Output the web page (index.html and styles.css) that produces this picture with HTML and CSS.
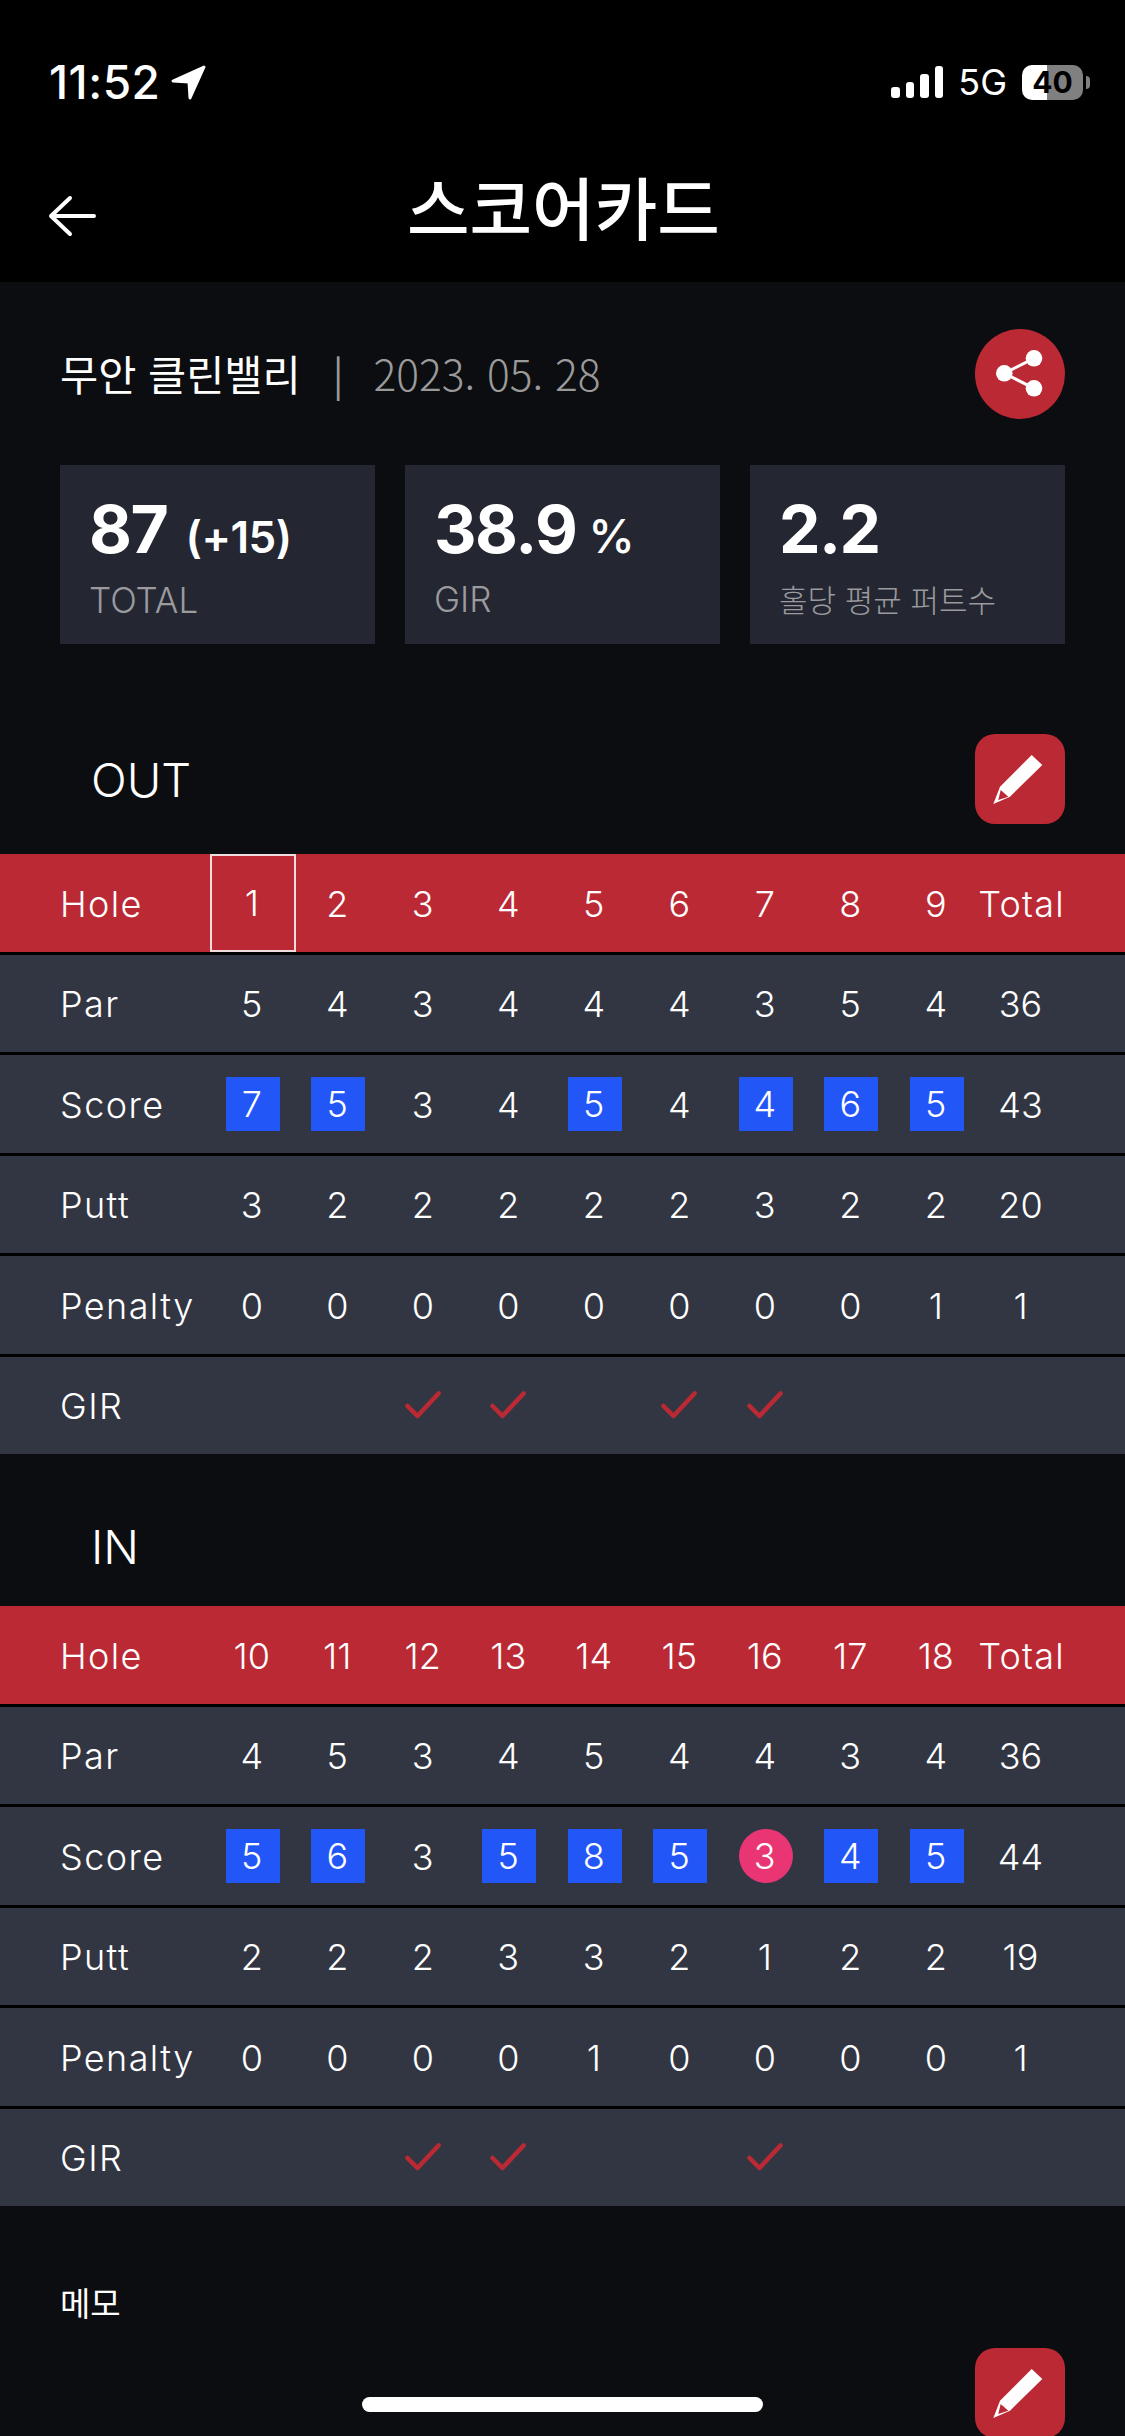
FILE: index.html
```html
<!DOCTYPE html>
<html lang="ko">
<head>
    <meta charset="UTF-8">
    <meta name="viewport" content="width=device-width, initial-scale=1.0">
    <title>스코어카드</title>
    <link rel="stylesheet" href="styles.css">
</head>
<body>
    <div class="page">
        <header class="top">
            <div class="status">
                <div class="status-left">
                    <span class="time">11:52</span>
                    <svg class="loc" width="36" height="35" viewBox="0 0 36 35"><path d="M33 2 L2 16 L18 17 L19 33 Z" fill="#fff" stroke="#fff" stroke-width="3" stroke-linejoin="round"/></svg>
                </div>
                <div class="status-right">
                    <div class="signal"><i class="b1"></i><i class="b2"></i><i class="b3"></i><i class="b4"></i></div>
                    <span class="net">5G</span>
                    <div class="battery">40</div>
                    <div class="battery-nub"></div>
                </div>
            </div>
            <div class="nav">
                <svg class="back" width="50" height="42" viewBox="0 0 50 42"><path d="M23 3 L4 21 L23 39 M4 21 H47" fill="none" stroke="#fff" stroke-width="4" stroke-linecap="round" stroke-linejoin="round"/></svg>
                <h1>스코어카드</h1>
            </div>
        </header>

        <main class="content">
            <div class="course">
                <div class="course-info">
                    <span class="course-name">무안 클린밸리</span>
                    <span class="course-sep">|</span>
                    <span class="course-date">2023. 05. 28</span>
                </div>
                <button class="round-btn">
                    <svg width="90" height="90" viewBox="0 0 90 90"><path d="M59 29.3 L29.3 44.3 L59 59.3" fill="none" stroke="#fff" stroke-width="3"/><circle cx="59" cy="29.3" r="8.3" fill="#fff"/><circle cx="29.3" cy="44.3" r="8.3" fill="#fff"/><circle cx="59" cy="59.3" r="8.3" fill="#fff"/></svg>
                </button>
            </div>

            <div class="stats">
                <div class="stat">
                    <div class="stat-value">87 <small>(+15)</small></div>
                    <div class="stat-label">TOTAL</div>
                </div>
                <div class="stat">
                    <div class="stat-value">38.9<small class="pct">%</small></div>
                    <div class="stat-label">GIR</div>
                </div>
                <div class="stat">
                    <div class="stat-value">2.2</div>
                    <div class="stat-label ko">홀당 평균 퍼트수</div>
                </div>
            </div>

            <div class="section-head head-out">
                <span>OUT</span>
                <button class="edit-btn">
                    <svg width="90" height="90" viewBox="0 0 90 90"><path fill-rule="evenodd" d="M56.7 21 L67.3 31 L35 62.7 L18.3 70 L25 52.7 Z M25.7 56 L33.3 62.7 L23.3 66 Z" fill="#fff"/></svg>
                </button>
            </div>

            <div class="card">
                <div class="row row-hole">
                    <div class="label">Hole</div>
                    <div class="cell selected">1</div><div class="cell">2</div><div class="cell">3</div><div class="cell">4</div><div class="cell">5</div><div class="cell">6</div><div class="cell">7</div><div class="cell">8</div><div class="cell">9</div><div class="cell">Total</div>
                </div>
                <div class="row">
                    <div class="label">Par</div>
                    <div class="cell">5</div><div class="cell">4</div><div class="cell">3</div><div class="cell">4</div><div class="cell">4</div><div class="cell">4</div><div class="cell">3</div><div class="cell">5</div><div class="cell">4</div><div class="cell">36</div>
                </div>
                <div class="row">
                    <div class="label">Score</div>
                    <div class="cell"><span class="bogey">7</span></div><div class="cell"><span class="bogey">5</span></div><div class="cell">3</div><div class="cell">4</div><div class="cell"><span class="bogey">5</span></div><div class="cell">4</div><div class="cell"><span class="bogey">4</span></div><div class="cell"><span class="bogey">6</span></div><div class="cell"><span class="bogey">5</span></div><div class="cell">43</div>
                </div>
                <div class="row">
                    <div class="label">Putt</div>
                    <div class="cell">3</div><div class="cell">2</div><div class="cell">2</div><div class="cell">2</div><div class="cell">2</div><div class="cell">2</div><div class="cell">3</div><div class="cell">2</div><div class="cell">2</div><div class="cell">20</div>
                </div>
                <div class="row">
                    <div class="label">Penalty</div>
                    <div class="cell">0</div><div class="cell">0</div><div class="cell">0</div><div class="cell">0</div><div class="cell">0</div><div class="cell">0</div><div class="cell">0</div><div class="cell">0</div><div class="cell">1</div><div class="cell">1</div>
                </div>
                <div class="row">
                    <div class="label">GIR</div>
                    <div class="cell"></div><div class="cell"></div>
                    <div class="cell"><svg class="check" width="36" height="28" viewBox="0 0 36 28"><path d="M2.5 15 L12.5 25 L33.5 2.5" /></svg></div>
                    <div class="cell"><svg class="check" width="36" height="28" viewBox="0 0 36 28"><path d="M2.5 15 L12.5 25 L33.5 2.5" /></svg></div>
                    <div class="cell"></div>
                    <div class="cell"><svg class="check" width="36" height="28" viewBox="0 0 36 28"><path d="M2.5 15 L12.5 25 L33.5 2.5" /></svg></div>
                    <div class="cell"><svg class="check" width="36" height="28" viewBox="0 0 36 28"><path d="M2.5 15 L12.5 25 L33.5 2.5" /></svg></div>
                    <div class="cell"></div><div class="cell"></div><div class="cell"></div>
                </div>
            </div>

            <div class="section-head head-in">
                <span>IN</span>
            </div>

            <div class="card">
                <div class="row row-hole">
                    <div class="label">Hole</div>
                    <div class="cell">10</div><div class="cell">11</div><div class="cell">12</div><div class="cell">13</div><div class="cell">14</div><div class="cell">15</div><div class="cell">16</div><div class="cell">17</div><div class="cell">18</div><div class="cell">Total</div>
                </div>
                <div class="row">
                    <div class="label">Par</div>
                    <div class="cell">4</div><div class="cell">5</div><div class="cell">3</div><div class="cell">4</div><div class="cell">5</div><div class="cell">4</div><div class="cell">4</div><div class="cell">3</div><div class="cell">4</div><div class="cell">36</div>
                </div>
                <div class="row">
                    <div class="label">Score</div>
                    <div class="cell"><span class="bogey">5</span></div><div class="cell"><span class="bogey">6</span></div><div class="cell">3</div><div class="cell"><span class="bogey">5</span></div><div class="cell"><span class="bogey">8</span></div><div class="cell"><span class="bogey">5</span></div><div class="cell"><span class="birdie">3</span></div><div class="cell"><span class="bogey">4</span></div><div class="cell"><span class="bogey">5</span></div><div class="cell">44</div>
                </div>
                <div class="row">
                    <div class="label">Putt</div>
                    <div class="cell">2</div><div class="cell">2</div><div class="cell">2</div><div class="cell">3</div><div class="cell">3</div><div class="cell">2</div><div class="cell">1</div><div class="cell">2</div><div class="cell">2</div><div class="cell">19</div>
                </div>
                <div class="row">
                    <div class="label">Penalty</div>
                    <div class="cell">0</div><div class="cell">0</div><div class="cell">0</div><div class="cell">0</div><div class="cell">1</div><div class="cell">0</div><div class="cell">0</div><div class="cell">0</div><div class="cell">0</div><div class="cell">1</div>
                </div>
                <div class="row">
                    <div class="label">GIR</div>
                    <div class="cell"></div><div class="cell"></div>
                    <div class="cell"><svg class="check" width="36" height="28" viewBox="0 0 36 28"><path d="M2.5 15 L12.5 25 L33.5 2.5" /></svg></div>
                    <div class="cell"><svg class="check" width="36" height="28" viewBox="0 0 36 28"><path d="M2.5 15 L12.5 25 L33.5 2.5" /></svg></div>
                    <div class="cell"></div><div class="cell"></div>
                    <div class="cell"><svg class="check" width="36" height="28" viewBox="0 0 36 28"><path d="M2.5 15 L12.5 25 L33.5 2.5" /></svg></div>
                    <div class="cell"></div><div class="cell"></div><div class="cell"></div>
                </div>
            </div>

            <div class="memo">
                <div class="memo-title">메모</div>
                <div class="memo-actions">
                    <button class="edit-btn">
                        <svg width="90" height="90" viewBox="0 0 90 90"><path fill-rule="evenodd" d="M56.7 21 L67.3 31 L35 62.7 L18.3 70 L25 52.7 Z M25.7 56 L33.3 62.7 L23.3 66 Z" fill="#fff"/></svg>
                    </button>
                </div>
            </div>
        </main>

        <div class="home-bar"></div>
    </div>
</body>
</html>
```

FILE: styles.css
```css
* {
    box-sizing: border-box;
}
body {
    margin: 0;
    background-color: #0c0d10;
    color: #fff;
    font-family: Inter, "Noto Sans CJK KR", sans-serif;
}
.page {
    position: relative;
    width: 1125px;
    height: 2436px;
    overflow: hidden;
    background-color: #0c0d10;
}
button {
    display: block;
    padding: 0;
    border: none;
    background-color: #bb2a34;
}
svg {
    display: block;
}

/* header */
.top {
    height: 282px;
    background-color: #000;
}
.status {
    display: flex;
    justify-content: space-between;
    align-items: center;
    height: 164px;
    padding: 0 35px 0 49px;
}
.status-left {
    display: flex;
    align-items: center;
    gap: 11px;
}
.time {
    font-size: 46px;
    font-weight: 500;
    line-height: 50px;
    letter-spacing: 0.5px;
}
.status-right {
    display: flex;
    align-items: center;
}
.signal {
    display: flex;
    align-items: flex-end;
    gap: 6px;
    height: 32px;
    margin-right: 15px;
}
.signal i {
    display: block;
    width: 8.5px;
    border-radius: 3px;
    background-color: #fff;
}
.signal .b1 { height: 11px; }
.signal .b2 { height: 16px; }
.signal .b3 { height: 24px; }
.signal .b4 { height: 32px; }
.net {
    font-size: 36px;
    font-weight: 400;
    margin-right: 15px;
}
.battery {
    width: 61px;
    height: 35px;
    border-radius: 10px;
    background: linear-gradient(to right, #fff 25px, #808080 25px);
    color: #000;
    font-size: 30px;
    font-weight: 700;
    line-height: 35px;
    text-align: center;
}
.battery-nub {
    width: 4px;
    height: 13px;
    margin-left: 3px;
    border-radius: 0 4px 4px 0;
    background-color: #808080;
}
.nav {
    display: flex;
    align-items: center;
    height: 118px;
    padding: 0 0 34px 47px;
}
.back {
    margin-top: 20px;
}
.nav h1 {
    margin: 0 0 0 310px;
    font-family: "Noto Sans CJK KR", sans-serif;
    font-size: 68px;
    font-weight: 500;
    line-height: 84px;
}

/* course + summary */
.content {
    display: block;
}
.course {
    display: flex;
    justify-content: space-between;
    align-items: center;
    margin-top: 47px;
    padding: 0 60px;
}
.course-info {
    display: flex;
    align-items: center;
    margin-top: -3px;
    font-family: "Noto Sans CJK KR", sans-serif;
}
.course-name {
    font-size: 41.5px;
    font-weight: 400;
}
.course-sep {
    margin: 0 30px 0 32px;
    color: #9a9a9a;
    font-size: 40px;
    font-weight: 400;
}
.course-date {
    color: #9a9a9a;
    font-size: 42.5px;
    font-weight: 300;
}
.round-btn {
    width: 90px;
    height: 90px;
    border-radius: 50%;
}
.stats {
    display: grid;
    grid-template-columns: repeat(3, 1fr);
    gap: 30px;
    margin-top: 46px;
    padding: 0 60px;
}
.stat {
    height: 179px;
    padding: 31px 0 0 29px;
    background-color: #242731;
}
.stat-value {
    font-size: 66px;
    font-weight: 700;
    line-height: 66px;
    letter-spacing: -1.5px;
    white-space: nowrap;
}
.stat-value small {
    margin-left: 4px;
    font-size: 44px;
    font-weight: 600;
    letter-spacing: -0.5px;
}
.stat-value .pct {
    margin-left: 12px;
    font-size: 47px;
    font-weight: 500;
}
.stat-label {
    margin-top: 10px;
    color: #9a9a9f;
    font-size: 35px;
    font-weight: 300;
    line-height: 40px;
}
.stat-label.ko {
    margin-top: 17px;
    font-family: "Noto Sans CJK KR", sans-serif;
    font-size: 31px;
}

/* score tables */
.section-head {
    display: flex;
    justify-content: space-between;
    align-items: center;
    height: 90px;
    padding: 0 60px 0 91px;
    font-size: 47px;
    font-weight: 300;
}
.head-out {
    margin-top: 90px;
    margin-bottom: 30px;
}
.head-in {
    margin-top: 47px;
    margin-bottom: 15px;
}
.edit-btn {
    width: 90px;
    height: 90px;
    border-radius: 20px;
}
.row {
    display: grid;
    grid-template-columns: 210px repeat(9, 85.5px) 84px;
    height: 100.5px;
    border-bottom: 3px solid #000;
    background-color: #323642;
    font-size: 36px;
    font-weight: 300;
}
.row:last-child {
    height: 97.5px;
    border-bottom: none;
}
.row-hole {
    background-color: #bb2a34;
}
.label {
    display: flex;
    align-items: center;
    padding: 2px 0 0 60px;
    letter-spacing: 1.4px;
    white-space: nowrap;
}
.cell {
    display: flex;
    justify-content: center;
    align-items: center;
    padding: 2px 2px 0 0;
    white-space: nowrap;
}
.row-hole .cell:last-child {
    padding-right: 0;
    letter-spacing: 1.2px;
}
.selected {
    border: 2px solid #f0dcdd;
    padding: 0 2px 0 0;
}
.bogey, .birdie {
    display: flex;
    justify-content: center;
    align-items: center;
    flex-shrink: 0;
    width: 54px;
    height: 54px;
    margin: -2px -2px 0 0;
    padding: 1px 2px 0 0;
}
.bogey {
    background-color: #2356f6;
}
.birdie {
    border-radius: 50%;
    background-color: #ea3574;
}
.check {
    margin: -2px 0 0 0;
}
.check path {
    fill: none;
    stroke: #bb2a34;
    stroke-width: 4.5;
    stroke-linecap: round;
    stroke-linejoin: round;
}

/* memo */
.memo {
    padding: 71px 60px 0;
}
.memo-title {
    font-family: "Noto Sans CJK KR", sans-serif;
    font-size: 33px;
    font-weight: 400;
    line-height: 50px;
}
.memo-actions {
    display: flex;
    justify-content: flex-end;
    margin-top: 21px;
}
.home-bar {
    position: absolute;
    left: 362px;
    bottom: 24px;
    width: 401px;
    height: 15px;
    border-radius: 8px;
    background-color: #fff;
}
```
